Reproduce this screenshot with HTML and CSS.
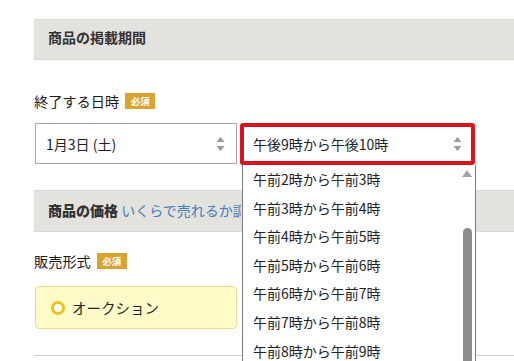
FILE: index.html
```html
<!DOCTYPE html>
<html lang="ja">
<head>
<meta charset="utf-8">
<link rel="stylesheet" href="styles.css">
</head>
<body>
<div class="page">
  <div class="section-head">商品の掲載期間</div>
  <div class="field-label">終了する日時<span class="badge">必須</span></div>
  <div class="row">
    <div class="select date">
      <span>1月3日 (土)</span>
      <span class="arrows"><svg width="9" height="16" viewBox="0 0 9 16"><path d="M4.5 1 L8.5 6 H0.5 Z" fill="#9a9a9a"/><path d="M4.5 15 L8.5 10 H0.5 Z" fill="#9a9a9a"/></svg></span>
    </div>
    <div class="time-wrap">
      <div class="select time">
        <span>午後9時から午後10時</span>
        <span class="arrows"><svg width="9" height="16" viewBox="0 0 9 16"><path d="M4.5 1 L8.5 6 H0.5 Z" fill="#9a9a9a"/><path d="M4.5 15 L8.5 10 H0.5 Z" fill="#9a9a9a"/></svg></span>
      </div>
      <div class="dropdown">
        <ul class="options">
          <li>午前2時から午前3時</li>
          <li>午前3時から午前4時</li>
          <li>午前4時から午前5時</li>
          <li>午前5時から午前6時</li>
          <li>午前6時から午前7時</li>
          <li>午前7時から午前8時</li>
          <li>午前8時から午前9時</li>
        </ul>
        <div class="scrollbar">
          <svg class="up" width="10" height="7" viewBox="0 0 10 7"><path d="M5 0 L10 7 H0 Z" fill="#a3a3a3"/></svg>
          <div class="thumb"></div>
        </div>
      </div>
    </div>
  </div>
  <div class="section-head second"><div class="head-text"><b>商品の価格</b> <span class="link">いくらで売れるか調べる</span></div></div>
  <div class="field-label sale">販売形式<span class="badge">必須</span></div>
  <div class="auction">
    <span class="radio"></span>
    <span>オークション</span>
  </div>
  <div class="divider"></div>
</div>
</body>
</html>
```
FILE: styles.css
```css
* { box-sizing: border-box; }
html, body { margin: 0; padding: 0; background: #fff; }
body {
  font-family: "Noto Sans CJK JP", "Noto Sans", sans-serif;
  color: #222;
  width: 514px;
  height: 361px;
  overflow: hidden;
}
.page { padding-left: 34px; padding-top: 19px; }
.section-head {
  height: 41px;
  background: #e3e2dc;
  border-top: 1px solid #d9d8d1;
  border-bottom: 1px solid #d9d8d1;
  padding-left: 14px;
  font-size: 14px;
  font-weight: bold;
  line-height: 35px;
  color: #333;
  white-space: nowrap;
  overflow: hidden;
}
.section-head.second { margin-top: 25px; height: 42px; line-height: 39px; }
.head-text { width: 193px; overflow: hidden; white-space: nowrap; }
.section-head .link { color: #3d7fc1; font-weight: normal; }
.field-label {
  margin-top: 31px;
  font-size: 14.2px;
  line-height: 20px;
  display: flex;
  align-items: center;
  color: #1a1a1a;
}
.field-label.sale { margin-top: 19px; }
.badge {
  display: inline-block;
  margin-left: 6px;
  width: 30px;
  height: 16px;
  background: #d8a42f;
  color: #fff;
  font-size: 9.5px;
  font-weight: bold;
  line-height: 16px;
  text-align: center;
}
.row { display: flex; margin-top: 12px; height: 42px; }
.select {
  display: flex;
  align-items: center;
  justify-content: space-between;
  font-size: 14px;
  color: #222;
  background: #fff;
}
.select.date {
  margin-left: 1px;
  width: 202px;
  height: 41px;
  border: 1px solid #a8a8a8;
  padding: 0 11px 0 10px;
}
.arrows { display: flex; align-items: center; }
.time-wrap { position: relative; margin-left: 3px; width: 235px; }
.select.time {
  width: 235px;
  height: 42px;
  border: 4px solid #d8131d;
  border-radius: 3px;
  padding: 0 9px 0 9px;
}
.dropdown {
  position: absolute;
  left: 2px;
  top: 42px;
  width: 234px;
  height: 196px;
  background: #fff;
  border-left: 1px solid #7a7a7a;
  border-right: 1px solid #7a7a7a;
  display: flex;
  overflow: hidden;
}
.options {
  list-style: none;
  margin: 0;
  padding: 0;
  flex: 1;
}
.options li {
  height: 28.6px;
  line-height: 28.6px;
  padding-left: 10px;
  font-size: 14px;
  color: #222;
}
.scrollbar {
  width: 14px;
  position: relative;
}
.scrollbar .up { position: absolute; left: 1px; top: 5px; }
.scrollbar .thumb {
  position: absolute;
  left: 2px;
  top: 63px;
  width: 9px;
  height: 133px;
  background: #8c8c8c;
  border-radius: 5px 5px 0 0;
}
.auction {
  margin-top: 15px;
  margin-left: 1px;
  width: 202px;
  height: 43px;
  background: #fffbc9;
  border: 1px solid #e6dc96;
  border-radius: 4px;
  display: flex;
  align-items: center;
  padding-left: 15px;
  font-size: 14.5px;
  color: #222;
}
.radio {
  width: 14px;
  height: 14px;
  border-radius: 50%;
  border: 3.5px solid #f1c21b;
  background: #fff;
  margin-right: 7px;
}
.divider { margin-top: 26px; height: 1px; background: #cfcfcf; }
```
